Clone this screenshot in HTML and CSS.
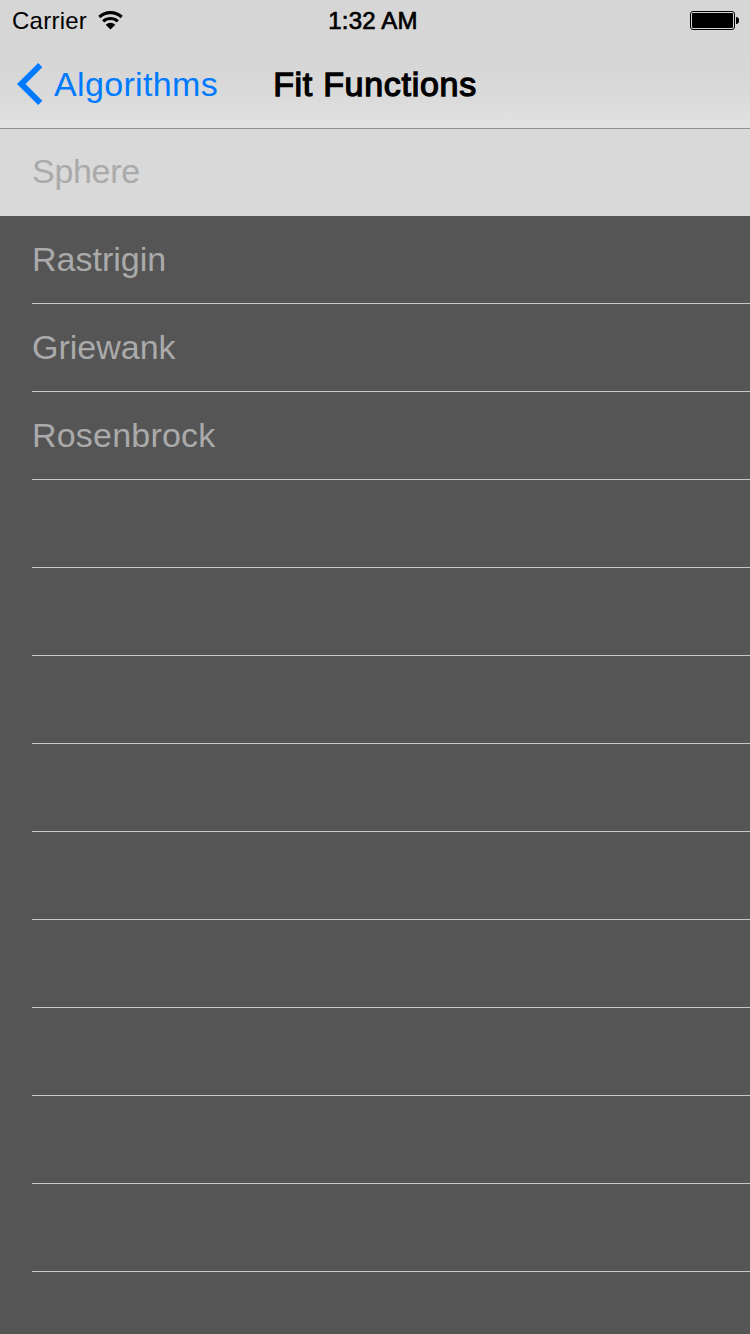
FILE: index.html
```html
<!DOCTYPE html>
<html lang="en">
<head>
<meta charset="utf-8">
<title>Fit Functions</title>
<link rel="stylesheet" href="styles.css">
</head>
<body>
<header class="header">
  <div class="status">
    <div class="status-left">
      <span class="carrier">Carrier</span>
      <svg class="wifi" width="26" height="20" viewBox="0 0 26 20">
        <g fill="none" stroke="#000" stroke-width="3.1">
          <path d="M1.3 7A16.5 16.5 0 0 1 23.7 7"/>
          <path d="M5.2 11.3A10.8 10.8 0 0 1 19.8 11.3"/>
        </g>
        <path d="M7.7 14.7A7 7 0 0 1 17.3 14.7L12.5 19.4Z"/>
      </svg>
    </div>
    <span class="time">1:32 AM</span>
    <div class="status-right">
      <svg class="battery" width="50" height="20" viewBox="0 0 50 20">
        <rect x="0.5" y="0.5" width="44" height="18" rx="2.5" fill="none" stroke="#000"/>
        <rect x="2" y="2" width="41" height="15" rx="1"/>
        <path d="M46 6C48.3 6 49 7.5 49 9.5S48.3 13 46 13Z"/>
      </svg>
    </div>
  </div>
  <nav class="nav">
    <a class="back">
      <svg class="chevron" width="26" height="42" viewBox="0 0 26 42"><path d="M21.2 0L25.3 4.2L8.5 21L25.3 37.8L21.2 42L0 21Z" fill="#007aff"/></svg>
      <span class="back-label">Algorithms</span>
    </a>
    <h1 class="title">Fit Functions</h1>
  </nav>
</header>
<ul class="list">
  <li class="row selected"><span class="sphere">Sphere</span></li>
  <li class="row"><span class="rastrigin">Rastrigin</span></li>
  <li class="row"><span class="griewank">Griewank</span></li>
  <li class="row"><span class="rosenbrock">Rosenbrock</span></li>
  <li class="row"></li>
  <li class="row"></li>
  <li class="row"></li>
  <li class="row"></li>
  <li class="row"></li>
  <li class="row"></li>
  <li class="row"></li>
  <li class="row"></li>
  <li class="row"></li>
  <li class="row"></li>
</ul>
</body>
</html>
```
FILE: styles.css
```css
* { box-sizing: border-box; }
html, body { height: 100%; }
body {
  margin: 0;
  overflow: hidden;
  background: #555;
  font-family: "Liberation Sans", Arial, sans-serif;
}
.header {
  position: relative;
  height: 128px;
  background: linear-gradient(#d6d6d6 0, #d6d6d6 60px, #dadada 95px, #e2e2e2 128px);
  box-shadow: 0 1px 0 #929292;
}
.status {
  display: grid;
  grid-template-columns: 1fr auto 1fr;
  height: 40px;
  font-size: 24px;
  line-height: 42px;
}
.status-left { display: flex; padding-left: 12px; }
.carrier { width: 86px; letter-spacing: 0.25px; }
.wifi { margin-top: 10px; }
.time {
  margin-right: 4px;
  letter-spacing: 0.2px;
  -webkit-text-stroke: 0.7px #000;
}
.status-right { display: flex; justify-content: flex-end; padding: 11px 10px 0 0; }
.nav {
  display: grid;
  grid-template-columns: 1fr auto 1fr;
  height: 88px;
  line-height: 88px;
  font-size: 34px;
}
.back { display: flex; padding-left: 17px; color: #007aff; }
.chevron { flex: none; margin-top: 23px; }
.back-label { margin-left: 11px; letter-spacing: 0.35px; }
.title {
  margin: 0;
  font-size: 34px;
  font-weight: 400;
  letter-spacing: 0.7px;
  -webkit-text-stroke: 1.3px #000;
}
.list { margin: 0; padding: 0; list-style: none; }
.row {
  height: 88px;
  margin-left: 32px;
  border-bottom: 1px solid #c8c7cc;
  color: #aaa;
  font-size: 34px;
  line-height: 86px;
}
.selected {
  margin-left: 0;
  padding-left: 32px;
  border-bottom: 0;
  background: #d9d9d9;
}
.sphere { letter-spacing: -0.3px; }
.rosenbrock { letter-spacing: 0.2px; }
```
